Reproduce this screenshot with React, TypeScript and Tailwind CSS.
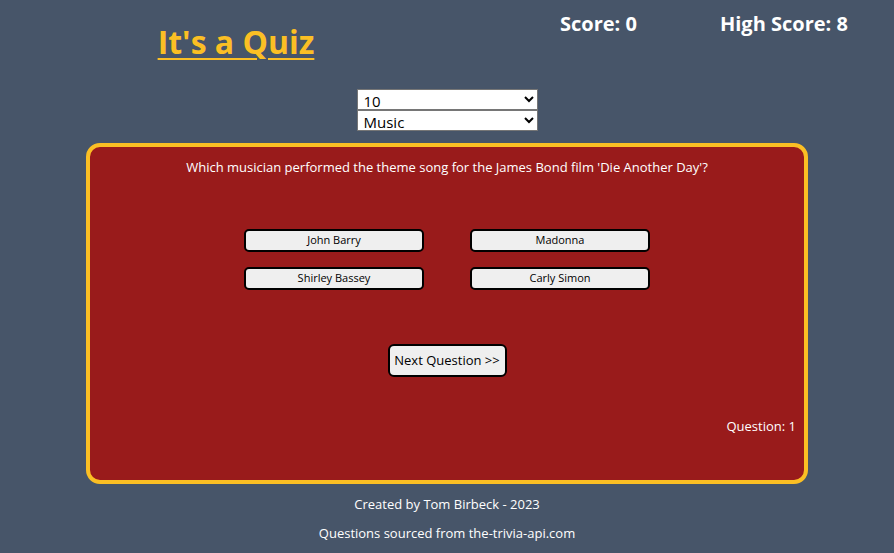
const FONT = "font-['Open_Sans',sans-serif]";

function AnswerButton({ label }: { label: string }) {
  return (
    <button className="h-[23px] w-[180px] rounded-[5px] border-2 border-black bg-[#efefef] text-[11px] text-black">
      {label}
    </button>
  );
}

export default function App() {
  const answers = ["John Barry", "Madonna", "Shirley Bassey", "Carly Simon"];

  return (
    <div className={`min-h-[553px] w-full bg-[#475569] ${FONT}`}>
      {/* header */}
      <div className="flex h-[89px] items-start">
        <div className="flex w-[472px] justify-center pt-[22px]">
          <h1 className="text-[32px] font-bold leading-[40px] text-[#fbbf24] underline decoration-2 underline-offset-4">
            It's a Quiz
          </h1>
        </div>
        <div className="flex gap-[83px] pl-[88px] pt-[10px] text-[20px] font-bold leading-[28px] text-white">
          <span>Score: 0</span>
          <span>High Score: 8</span>
        </div>
      </div>

      {/* options */}
      <div className="flex flex-col items-center">
        <select className="h-[21px] w-[181px] border border-[#767676] bg-white px-[2px] text-[15px] leading-[18px] text-black" defaultValue="10">
          <option>10</option>
          <option>20</option>
        </select>
        <select className="h-[21px] w-[181px] border border-[#767676] bg-white px-[2px] text-[15px] leading-[18px] text-black" defaultValue="Music">
          <option>Music</option>
          <option>History</option>
        </select>
      </div>

      {/* quiz card */}
      <div className="mx-[86px] mt-[12px] flex h-[341px] flex-col rounded-[14px] border-4 border-[#fbbf24] bg-[#991b1b] px-[8px] pt-[11px] text-white">
        <p className="text-center text-[13px] leading-[18px]">
          Which musician performed the theme song for the James Bond film 'Die Another Day'?
        </p>
        <div className="mx-auto mt-[53px] grid grid-cols-2 gap-x-[46px] gap-y-[15px]">
          {answers.map((a) => (
            <AnswerButton key={a} label={a} />
          ))}
        </div>
        <div className="mt-[54px] flex justify-center">
          <button className="h-[33px] w-[119px] rounded-[6px] border-2 border-black bg-[#efefef] text-[13px] text-black">
            Next Question &gt;&gt;
          </button>
        </div>
        <p className="mt-[40px] text-right text-[13px] leading-[18px]">Question: 1</p>
      </div>

      {/* footer */}
      <div className="flex flex-col items-center pt-[11px] text-[13px] leading-[18px] text-white">
        <p>Created by Tom Birbeck - 2023</p>
        <p className="mt-[11px]">Questions sourced from the-trivia-api.com</p>
      </div>
    </div>
  );
}
